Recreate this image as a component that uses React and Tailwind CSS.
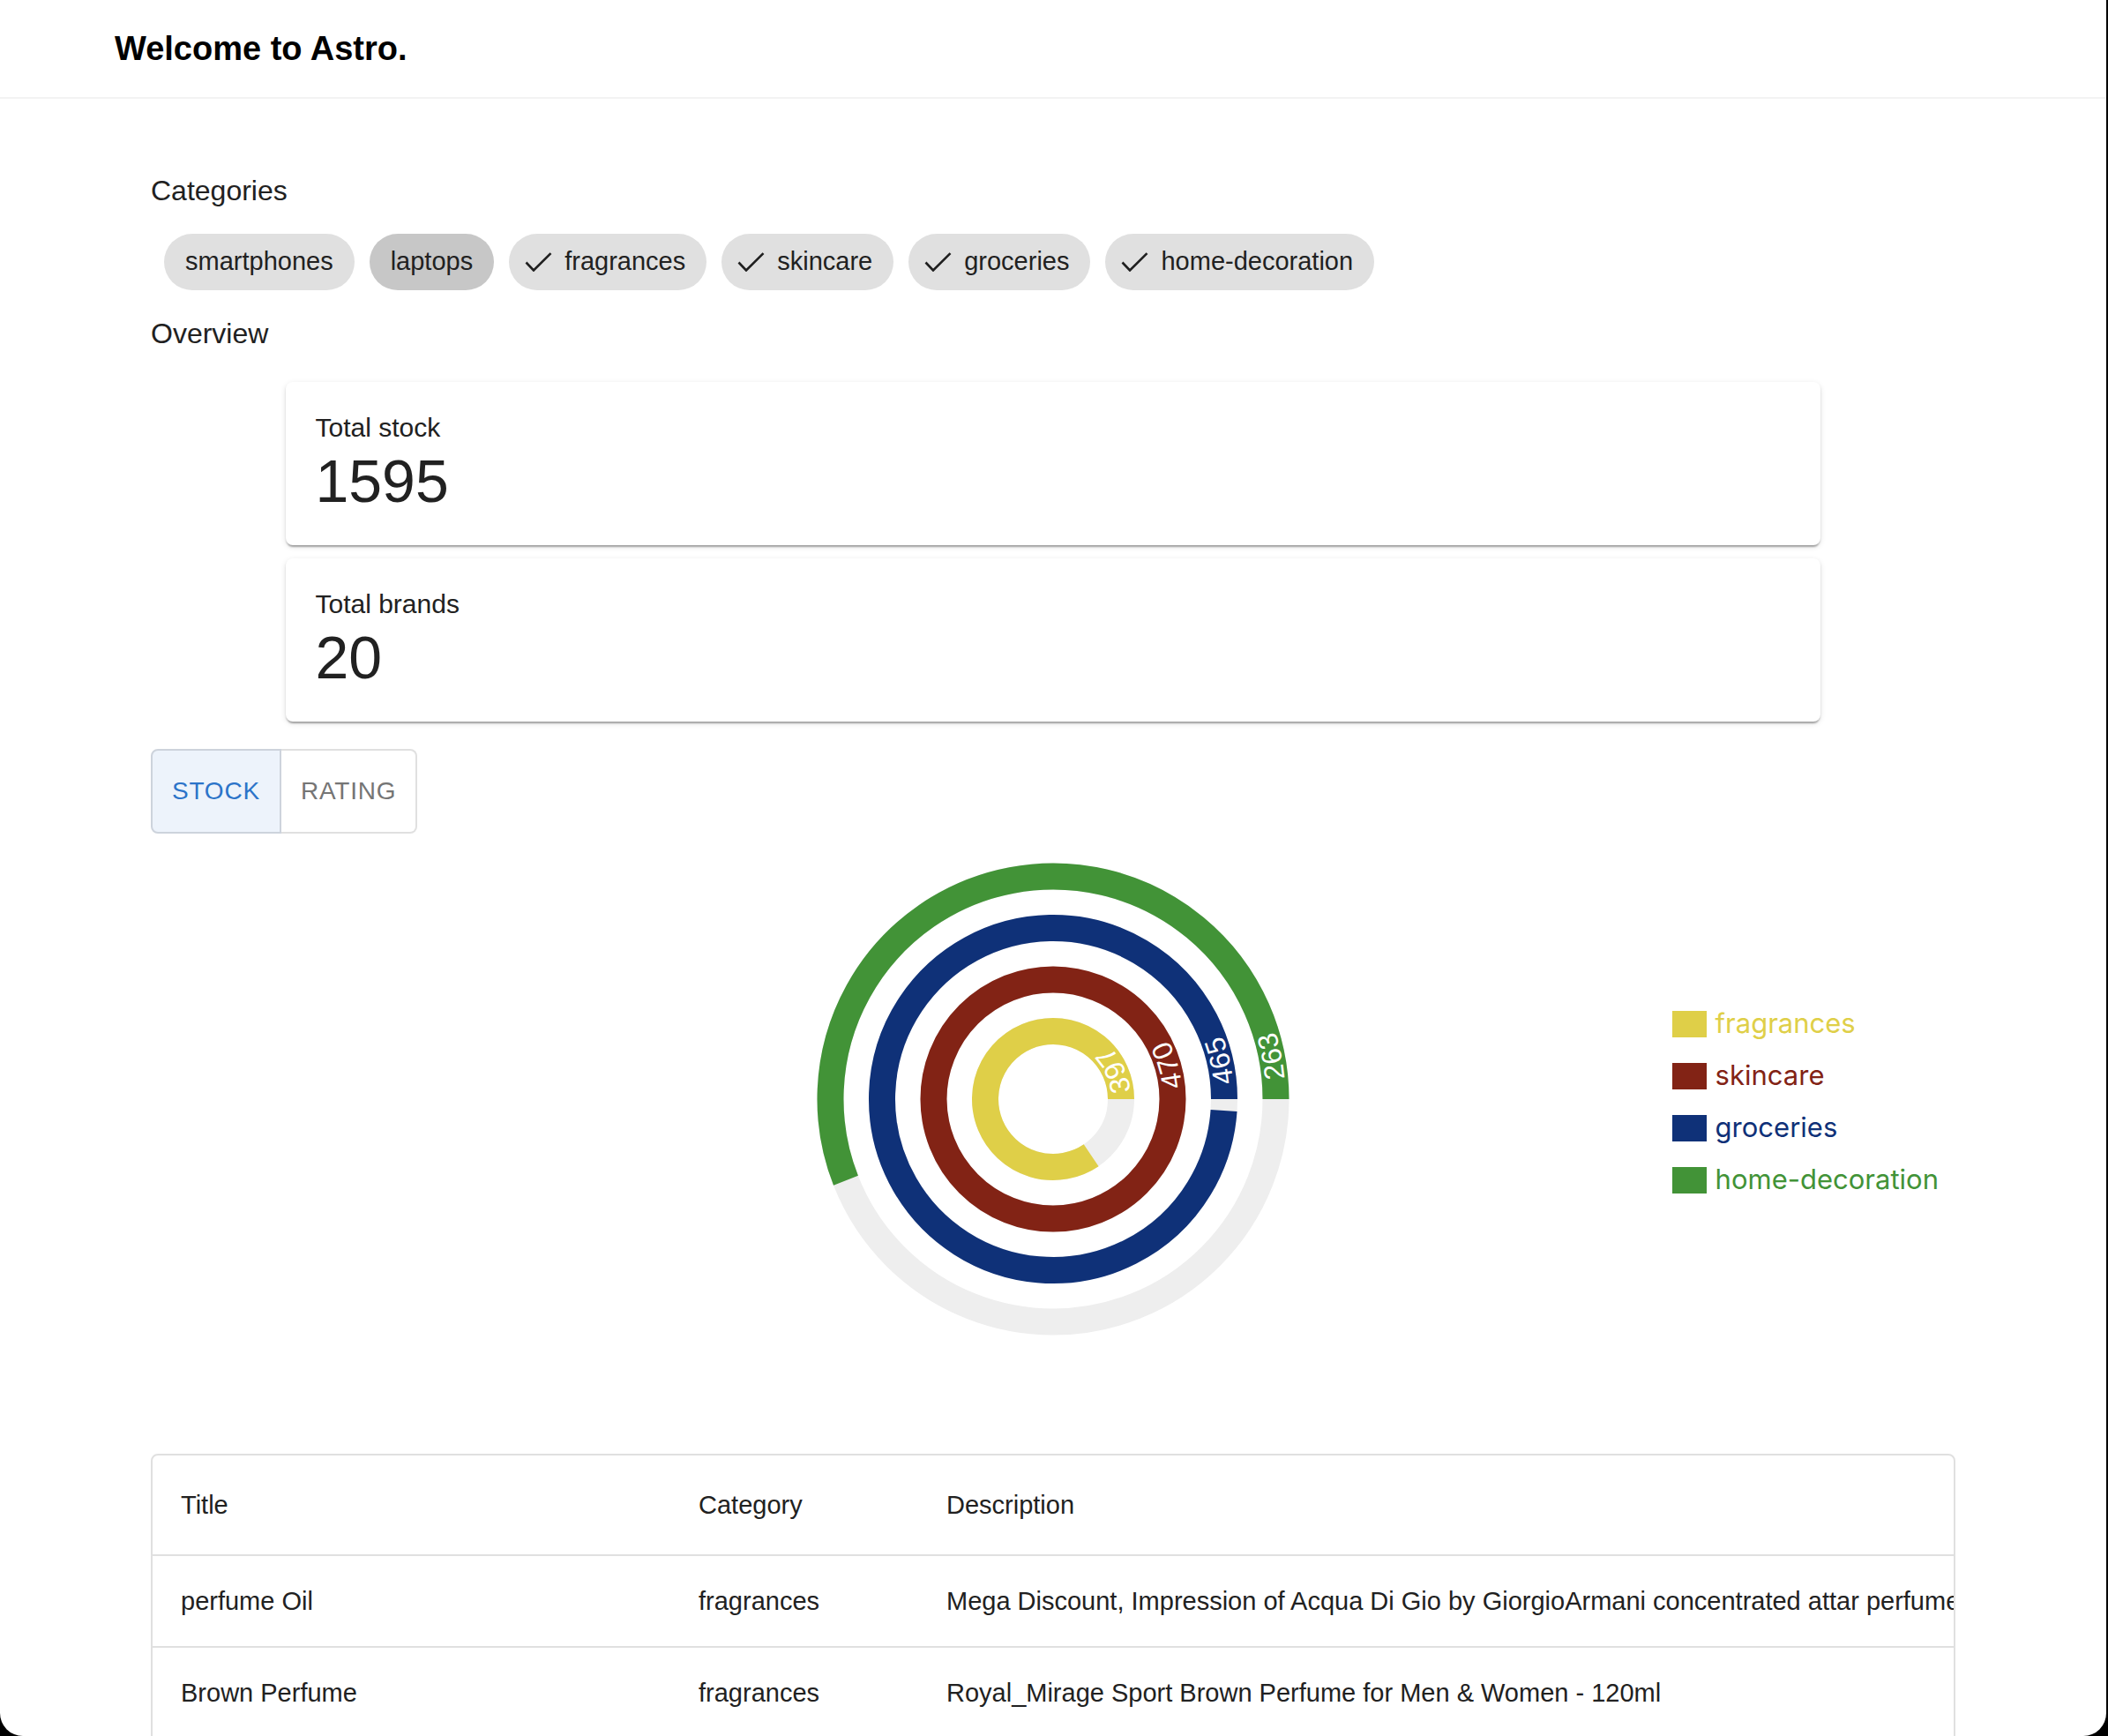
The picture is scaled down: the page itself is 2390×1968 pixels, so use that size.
import React from 'react';

const chips = [
    { label: 'smartphones', checked: false, active: false },
    { label: 'laptops', checked: false, active: true },
    { label: 'fragrances', checked: true },
    { label: 'skincare', checked: true },
    { label: 'groceries', checked: true },
    { label: 'home-decoration', checked: true },
];

const series = [
    { name: 'fragrances', value: 397, color: '#dfcf48', r: 77 },
    { name: 'skincare', value: 470, color: '#822315', r: 135.5 },
    { name: 'groceries', value: 465, color: '#0f3178', r: 194 },
    { name: 'home-decoration', value: 263, color: '#429337', r: 252.5 },
];

const rows = [
    { title: 'perfume Oil', category: 'fragrances', description: 'Mega Discount, Impression of Acqua Di Gio by GiorgioArmani concentrated attar perfume Oil' },
    { title: 'Brown Perfume', category: 'fragrances', description: 'Royal_Mirage Sport Brown Perfume for Men & Women - 120ml' },
    { title: 'Fog Scent Xpressio Perfume', category: 'fragrances', description: 'Product details of Best Fog Scent Xpressio Perfume 100ml For Men cool long lasting perfumes for Men' },
];

const MAX = 470;
const C = 300;

const pt = (r, a) => [C + r * Math.cos((a * Math.PI) / 180), C - r * Math.sin((a * Math.PI) / 180)];

// counter-clockwise arc on screen from a0 to a1 (degrees)
const arc = (r, a0, a1) => {
    const [x0, y0] = pt(r, a0);
    const [x1, y1] = pt(r, a1);
    const large = a1 - a0 > 180 ? 1 : 0;
    return `M${x0} ${y0} A${r} ${r} 0 ${large} 0 ${x1} ${y1}`;
};

const Check = () => (
    <svg width="31" height="22" viewBox="0 0 31 22" fill="none" className="shrink-0">
        <polyline points="1.5,11.5 10,20.5 29.5,1.2" stroke="#1f1f1f" strokeWidth="2.6" strokeLinejoin="miter" />
    </svg>
);

const Chip = ({ label, checked, active }) => (
    <div
        className={`h-[64px] rounded-full flex items-center text-[29px] text-[#212121] ${active ? 'bg-[#c7c7c7]' : 'bg-[#e0e0e0]'} ${checked ? 'pl-[18px] pr-[24px]' : 'px-[24px]'}`}
    >
        {checked && <Check />}
        <span className={checked ? 'ml-[14px]' : ''}>{label}</span>
    </div>
);

const StatCard = ({ label, value }) => (
    <div className="bg-white rounded-[8px] pt-[32px] pb-[33px] px-[33px] shadow-[0_4px_2px_-2px_rgba(0,0,0,0.2),0_2px_2px_0_rgba(0,0,0,0.14),0_2px_6px_0_rgba(0,0,0,0.12)]">
        <div className="text-[30px] leading-[40px] text-[#212121]">{label}</div>
        <div className="text-[68px] leading-[80px] text-[#212121]">{value}</div>
    </div>
);

const RadialChart = () => (
    <svg width="600" height="600" viewBox="0 0 600 600">
        <defs>
            {series.map((s, i) => (
                <path key={s.name} id={`lbl-${i}`} d={arc(s.r, 5, 364)} />
            ))}
        </defs>
        {series.map((s) => {
            const angle = (s.value / MAX) * 360;
            return (
                <g key={s.name}>
                    <circle cx={C} cy={C} r={s.r} fill="none" stroke="#eeeeee" strokeWidth="30" />
                    {angle >= 360 ? (
                        <circle cx={C} cy={C} r={s.r} fill="none" stroke={s.color} strokeWidth="30" />
                    ) : (
                        <path d={arc(s.r, 0, angle)} fill="none" stroke={s.color} strokeWidth="30" />
                    )}
                </g>
            );
        })}
        {series.map((s, i) => (
            <text key={s.name} fill="#ffffff" fontSize="32" dominantBaseline="central" fontFamily="'Liberation Sans', Arial, sans-serif">
                <textPath href={`#lbl-${i}`}>{s.value}</textPath>
            </text>
        ))}
    </svg>
);

export default function App() {
    return (
        <div className="w-[2390px] h-[1968px] bg-black overflow-hidden font-['Liberation_Sans',Arial,sans-serif]">
            <div className="w-[2388px] h-[1968px] bg-white rounded-b-[26px] overflow-hidden">
                <header className="h-[112px] flex items-center pl-[130px] border-b-2 border-[#f3f3f3]">
                    <h1 className="text-[38px] font-bold text-black">Welcome to Astro.</h1>
                </header>

                <main className="px-[171px] pt-[80px]">
                    <div className="text-[32px] leading-[48px] text-[#212121]">Categories</div>

                    <div className="mt-[25px] pl-[15px] flex gap-[17px]">
                        {chips.map((c) => (
                            <Chip key={c.label} {...c} />
                        ))}
                    </div>

                    <div className="mt-[25px] text-[32px] leading-[48px] text-[#212121]">Overview</div>

                    <div className="mt-[31px] w-[85%] mx-auto flex flex-col gap-[15px]">
                        <StatCard label="Total stock" value="1595" />
                        <StatCard label="Total brands" value="20" />
                    </div>

                    <div className="mt-[31px] flex">
                        <button className="h-[96px] px-[22px] border-2 border-[#cdd3dc] rounded-l-[8px] bg-[#edf3fb] text-[28px] uppercase tracking-[0.8px] text-[#2c74c9]">
                            Stock
                        </button>
                        <button className="h-[96px] px-[22px] border-2 border-l-0 border-[#e0e0e0] rounded-r-[8px] bg-white text-[28px] uppercase tracking-[0.8px] text-[#757575]">
                            Rating
                        </button>
                    </div>

                    <div className="mt-[1px] h-[600px] grid grid-cols-[1fr_600px_1fr] items-center">
                        <div />
                        <RadialChart />
                        <div className="flex justify-end pr-[19px] mt-[6px]">
                            <ul className="flex flex-col font-['Inter',sans-serif] text-[31px]">
                                {series.map((s) => (
                                    <li key={s.name} className="h-[59px] flex items-center gap-[10px]">
                                        <span className="w-[39px] h-[30px] shrink-0" style={{ backgroundColor: s.color }} />
                                        <span style={{ color: s.color }}>{s.name}</span>
                                    </li>
                                ))}
                            </ul>
                        </div>
                    </div>

                    <div className="mt-[102px] border-2 border-[#e0e0e0] rounded-t-[8px] overflow-hidden">
                        <table className="border-collapse text-[29px] text-[#212121] text-left">
                            <thead>
                                <tr className="border-b-2 border-[#e0e0e0]">
                                    <th className="w-[587px] min-w-[587px] px-[32px] py-[32px] leading-[48px] font-normal">Title</th>
                                    <th className="w-[281px] min-w-[281px] px-[32px] py-[32px] leading-[48px] font-normal">Category</th>
                                    <th className="px-[32px] py-[32px] leading-[48px] font-normal whitespace-nowrap">Description</th>
                                </tr>
                            </thead>
                            <tbody>
                                {rows.map((r) => (
                                    <tr key={r.title} className="border-b-2 border-[#e0e0e0]">
                                        <td className="px-[32px] py-[31px] leading-[40px]">{r.title}</td>
                                        <td className="px-[32px] py-[31px] leading-[40px]">{r.category}</td>
                                        <td className="px-[32px] py-[31px] leading-[40px] whitespace-nowrap">{r.description}</td>
                                    </tr>
                                ))}
                            </tbody>
                        </table>
                    </div>
                </main>
            </div>
        </div>
    );
}
